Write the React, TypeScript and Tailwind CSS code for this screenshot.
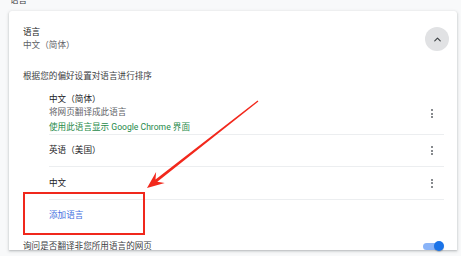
import { ChevronUp } from "lucide-react";

const Kebab = () => (
  <div className="mr-[11px] flex flex-col gap-[1.5px]">
    <span className="h-[2px] w-[2px] rounded-full bg-[#5f6368]" />
    <span className="h-[2px] w-[2px] rounded-full bg-[#5f6368]" />
    <span className="h-[2px] w-[2px] rounded-full bg-[#5f6368]" />
  </div>
);

export default function App() {
  return (
    <div className="relative h-[256px] w-[461px] overflow-hidden bg-[#f8f9fa] font-['Roboto','Noto_Sans_CJK_SC',sans-serif] text-[8.6px] text-[#202124]">
      {/* Section title, cut off at the top */}
      <div className="h-[17px] pl-[10px]">
        <div className="-mt-[6px] leading-[13px] text-[#3c4043]">语言</div>
      </div>

      {/* Card */}
      <div className="ml-[9px] mr-[4px] h-[239px] rounded-t-[3px] bg-white shadow-[0_1px_2px_rgba(60,64,67,0.25),0_1px_3px_1px_rgba(60,64,67,0.1)]">
        <div className="flex items-start justify-between pl-[14px] pr-[8px] pt-[15px]">
          <div>
            <div className="leading-[13px] text-[#202124]">语言</div>
            <div className="leading-[13px] text-[#5f6368]">中文（简体）</div>
          </div>
          <button
            type="button"
            className="mt-[1px] flex h-[24px] w-[24px] items-center justify-center rounded-full bg-[#e1e2e4] text-[#3c4043]"
          >
            <ChevronUp size={11} strokeWidth={2.5} />
          </button>
        </div>

        <div className="mt-[18px] pl-[14px] leading-[13px] text-[#3c4043]">
          根据您的偏好设置对语言进行排序
        </div>

        <div className="ml-[40px] mr-[13px]">
          <div className="flex items-center justify-between border-b border-[#eceef0] pt-[10px]">
            <div>
              <div className="leading-[13px]">中文（简体）</div>
              <div className="leading-[13px] text-[#5f6368]">将网页翻译成此语言</div>
              <div className="mt-[2px] leading-[13px] text-[#268a4a]">
                使用此语言显示 Google Chrome 界面
              </div>
            </div>
            <Kebab />
          </div>
          <div className="flex h-[32px] items-center justify-between border-b border-[#eceef0]">
            <div className="leading-[13px]">英语（美国）</div>
            <Kebab />
          </div>
          <div className="flex h-[33px] items-center justify-between border-b border-[#eceef0]">
            <div className="leading-[13px]">中文</div>
            <Kebab />
          </div>
          <div className="flex h-[31px] items-center leading-[13px] text-[#3f6fe0]">添加语言</div>
        </div>

        <div className="mt-[7px] flex h-[16px] items-center justify-between pl-[14px] pr-[13px]">
          <div className="leading-[13px] text-[#3c4043]">询问是否翻译非您所用语言的网页</div>
          <div className="relative flex h-[10px] w-[21px] items-center">
            <div className="h-[7px] w-[20px] rounded-full bg-[#8ab4f8]" />
            <div className="absolute right-0 top-0 h-[10px] w-[10px] rounded-full bg-[#1a73e8] shadow-[0_1px_1px_rgba(0,0,0,0.2)]" />
          </div>
        </div>
      </div>

      {/* Annotation overlay */}
      <div className="absolute left-[23px] top-[192px] h-[43px] w-[122px] border-2 border-[#f0281c]" />
      <svg
        className="pointer-events-none absolute left-0 top-0"
        width="461"
        height="256"
        viewBox="0 0 461 256"
      >
        <polygon
          fill="#f2281c"
          points="258.4,101.5 157.3,181.8 164.7,183 147,188 156.1,172 155.5,179.4 257.6,100.5"
        />
      </svg>
    </div>
  );
}
